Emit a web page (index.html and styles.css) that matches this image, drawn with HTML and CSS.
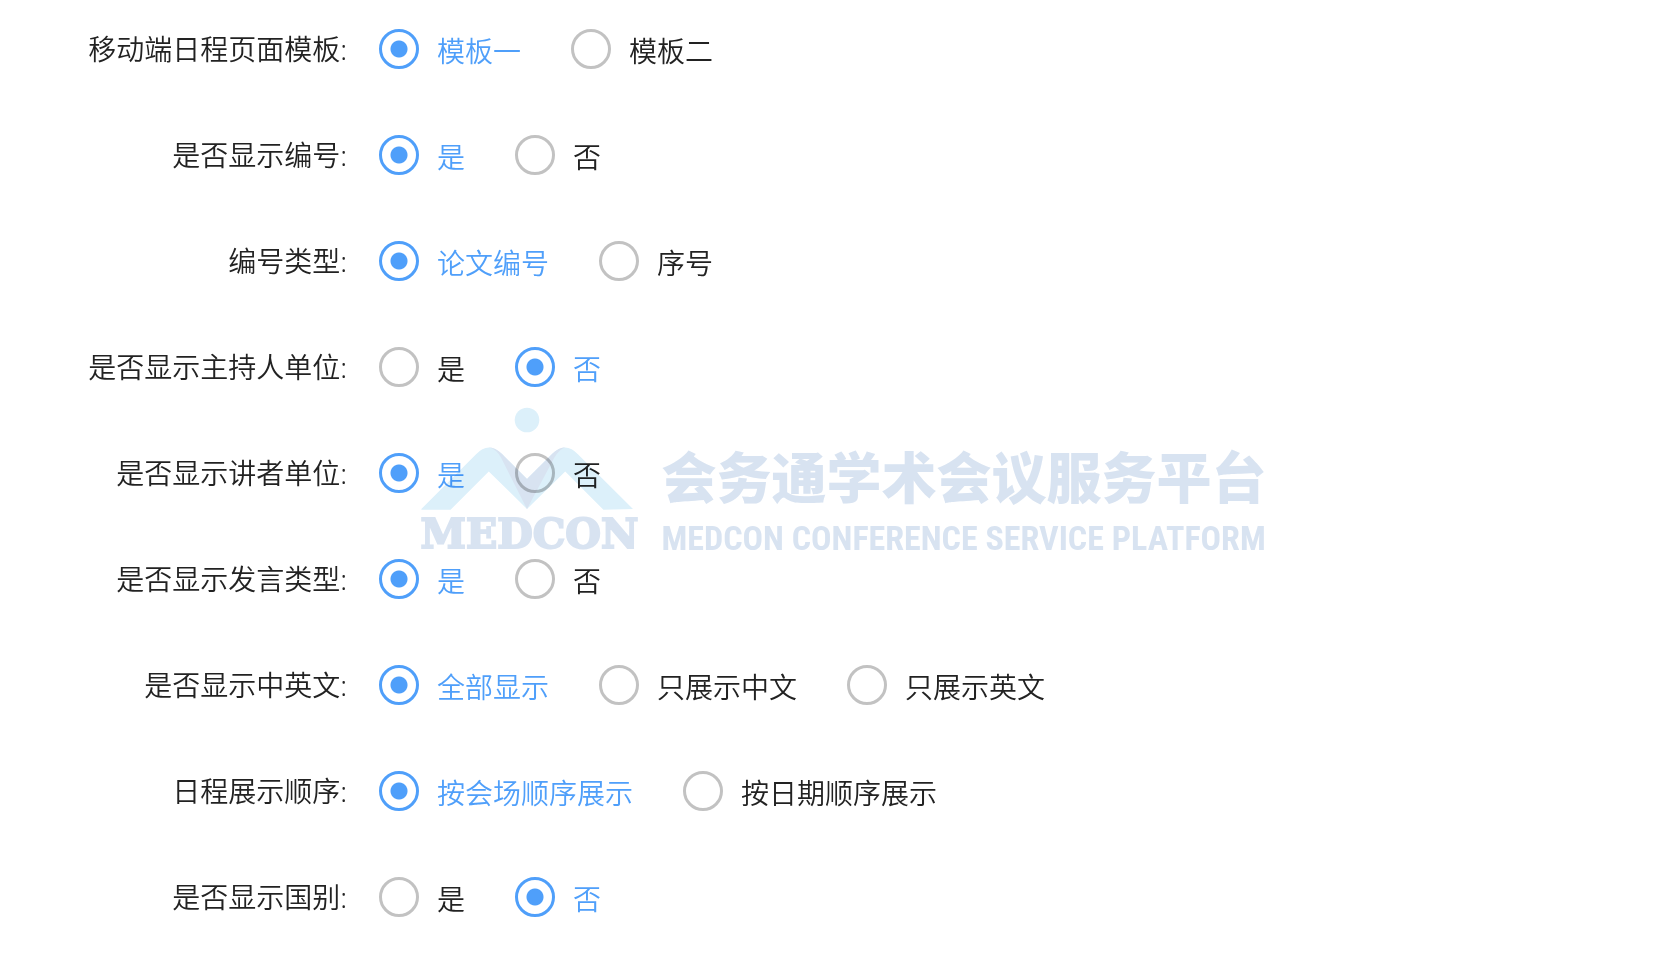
FILE: index.html
```html
<!DOCTYPE html>
<html lang="zh-CN">
<head>
    <meta charset="UTF-8">
    <meta name="viewport" content="width=device-width, initial-scale=1.0">
    <title>日程设置</title>
    <link rel="stylesheet" href="styles.css">
</head>
<body>

    <form class="settings-form">
        <div class="form-row" role="radiogroup" aria-labelledby="label-template">
            <span class="row-label" id="label-template">移动端日程页面模板:</span>
            <div class="options">
                <label class="option"><input type="radio" name="template" value="1" checked><span>模板一</span></label>
                <label class="option"><input type="radio" name="template" value="2"><span>模板二</span></label>
            </div>
        </div>

        <div class="form-row" role="radiogroup" aria-labelledby="label-number">
            <span class="row-label" id="label-number">是否显示编号:</span>
            <div class="options">
                <label class="option"><input type="radio" name="number" value="1" checked><span>是</span></label>
                <label class="option"><input type="radio" name="number" value="0"><span>否</span></label>
            </div>
        </div>

        <div class="form-row" role="radiogroup" aria-labelledby="label-number-type">
            <span class="row-label" id="label-number-type">编号类型:</span>
            <div class="options">
                <label class="option"><input type="radio" name="number_type" value="paper" checked><span>论文编号</span></label>
                <label class="option"><input type="radio" name="number_type" value="serial"><span>序号</span></label>
            </div>
        </div>

        <div class="form-row" role="radiogroup" aria-labelledby="label-host">
            <span class="row-label" id="label-host">是否显示主持人单位:</span>
            <div class="options">
                <label class="option"><input type="radio" name="host" value="1"><span>是</span></label>
                <label class="option"><input type="radio" name="host" value="0" checked><span>否</span></label>
            </div>
        </div>

        <div class="form-row" role="radiogroup" aria-labelledby="label-speaker">
            <span class="row-label" id="label-speaker">是否显示讲者单位:</span>
            <div class="options">
                <label class="option"><input type="radio" name="speaker" value="1" checked><span>是</span></label>
                <label class="option"><input type="radio" name="speaker" value="0"><span>否</span></label>
            </div>
        </div>

        <div class="form-row" role="radiogroup" aria-labelledby="label-speech-type">
            <span class="row-label" id="label-speech-type">是否显示发言类型:</span>
            <div class="options">
                <label class="option"><input type="radio" name="speech_type" value="1" checked><span>是</span></label>
                <label class="option"><input type="radio" name="speech_type" value="0"><span>否</span></label>
            </div>
        </div>

        <div class="form-row" role="radiogroup" aria-labelledby="label-language">
            <span class="row-label" id="label-language">是否显示中英文:</span>
            <div class="options">
                <label class="option"><input type="radio" name="language" value="all" checked><span>全部显示</span></label>
                <label class="option"><input type="radio" name="language" value="zh"><span>只展示中文</span></label>
                <label class="option"><input type="radio" name="language" value="en"><span>只展示英文</span></label>
            </div>
        </div>

        <div class="form-row" role="radiogroup" aria-labelledby="label-order">
            <span class="row-label" id="label-order">日程展示顺序:</span>
            <div class="options">
                <label class="option"><input type="radio" name="order" value="hall" checked><span>按会场顺序展示</span></label>
                <label class="option"><input type="radio" name="order" value="date"><span>按日期顺序展示</span></label>
            </div>
        </div>

        <div class="form-row" role="radiogroup" aria-labelledby="label-country">
            <span class="row-label" id="label-country">是否显示国别:</span>
            <div class="options">
                <label class="option"><input type="radio" name="country" value="1"><span>是</span></label>
                <label class="option"><input type="radio" name="country" value="0" checked><span>否</span></label>
            </div>
        </div>
    </form>

    <!-- Watermark over the form -->
    <div class="watermark">
        <div class="mark-logo">
            <svg class="mark-icon" viewBox="62 50 648 310" aria-hidden="true">
                <circle cx="380" cy="89" r="37" fill="#dcf0fa"/>
                <path fill="#dcf0fa" d="M62 357 L226 193 Q264 152 304 191 L380 267 L456 191 Q496 152 534 193 L699 357 L610 359 L495 244 L380 357 L265 244 L150 359 L62 359 Z"/>
                <path fill="#d8e3f1" d="M264 171 Q284 171 304 191 L380 267 L456 191 Q476 171 495 171 Q474 180 462 203 L380 357 L302 203 Q288 176 264 171 Z"/>
            </svg>
            <span class="mark-name">MEDCON</span>
        </div>
        <div class="mark-text">
            <span class="mark-title">会务通学术会议服务平台</span>
            <span class="mark-subtitle">MEDCON CONFERENCE SERVICE PLATFORM</span>
        </div>
    </div>

</body>
</html>
```
FILE: styles.css
```css
* {
    box-sizing: border-box;
}

body {
    margin: 0;
    background-color: #fff;
    color: #222;
    font-family: "Noto Sans", "Noto Sans CJK SC", sans-serif;
    font-size: 28px;
    font-weight: 350;
    line-height: 40px;
}

.settings-form {
    display: flex;
    flex-direction: column;
    gap: 66px;
    padding: 29px 0 40px;
}

.form-row {
    display: grid;
    grid-template-columns: 347px 1fr;
    column-gap: 32px;
    min-height: 40px;
}

.row-label {
    text-align: right;
    white-space: nowrap;
}

.options {
    display: flex;
    gap: 50px;
}

.option {
    display: flex;
    gap: 18px;
    height: 40px;
    white-space: nowrap;
    cursor: pointer;
}

.option span {
    padding-top: 2px;
}

.option input {
    appearance: none;
    flex: none;
    width: 40px;
    height: 40px;
    margin: 0;
    border: 3px solid #c2c2c2;
    border-radius: 50%;
    cursor: pointer;
}

.option input:checked {
    border-color: #4f9ffa;
    background: radial-gradient(circle, #4f9ffa 8px, transparent 9px);
}

.option input:checked + span {
    color: #4f9ffa;
}

.watermark {
    position: absolute;
    top: 0;
    left: 0;
    width: 100%;
    height: 100%;
    display: flex;
    justify-content: center;
    align-items: center;
    gap: 25px;
    color: #d8e3f1;
    mix-blend-mode: multiply;
    pointer-events: none;
}

.mark-logo {
    display: flex;
    flex-direction: column;
    width: 216px;
}

.mark-icon {
    display: block;
    width: 216px;
    height: 103px;
}

.mark-name {
    margin-top: 8px;
    font-family: "DejaVu Serif", serif;
    font-size: 41px;
    font-weight: bold;
    line-height: 32px;
    white-space: nowrap;
    -webkit-text-stroke: 2px #d8e3f1;
}

.mark-text {
    display: flex;
    flex-direction: column;
    width: 598px;
    padding-top: 54px;
    white-space: nowrap;
}

.mark-title {
    font-family: "Noto Sans CJK SC", sans-serif;
    font-size: 55px;
    font-weight: 900;
    line-height: 64px;
}

.mark-subtitle {
    font-family: "Roboto Condensed", Roboto, sans-serif;
    font-size: 34px;
    font-weight: bold;
    line-height: 64px;
}
```
